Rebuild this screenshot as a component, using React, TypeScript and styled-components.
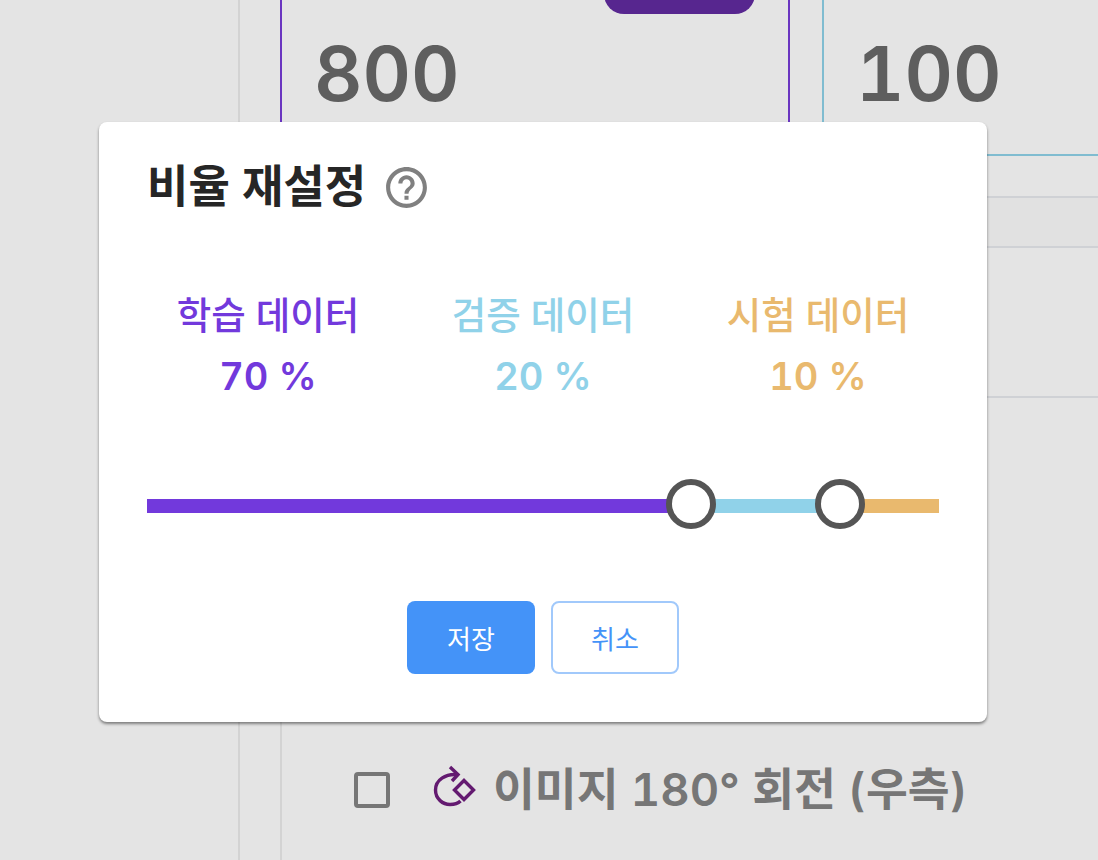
import { createGlobalStyle } from "styled-components";
import styled from "styled-components";

const splits = [
  { label: "학습 데이터", value: 70, color: "#7239dc", span: 544 },
  { label: "검증 데이터", value: 20, color: "#90d2e9", span: 149 },
  { label: "시험 데이터", value: 10, color: "#e9b96e", span: 99 },
];

export default function App() {
  return (
    <Page>
      <GlobalStyle />
      <Gutter />
      <Main>
        <Cards>
          <CountCard $tone="train">
            <TabButton />
            <Count>800</Count>
          </CountCard>
          <CountCard $tone="valid">
            <Count>100</Count>
          </CountCard>
        </Cards>
        <TableRow $height={50} $shade />
        <TableRow $height={150} />
        <OptionRow>
          <Checkbox />
          <RotateIcon viewBox="0 0 46 44" fill="none">
            <path d="M24 9.5C14 9 3.5 14.5 3.5 25C3.5 34 11 39.5 18 39.5C22 39.5 26 38.5 28.5 36" />
            <path d="M18 2L26 9.5L20 16" />
            <path d="M32 15.5L41.5 25L32 34.5L22.5 25Z" />
          </RotateIcon>
          <OptionLabel>이미지 180° 회전 (우측)</OptionLabel>
        </OptionRow>
      </Main>

      <Modal>
        <TitleRow>
          <Title>비율 재설정</Title>
          <HelpIcon viewBox="0 0 24 24">
            <path d="M11 18h2v-2h-2v2zm1-16C6.48 2 2 6.48 2 12s4.48 10 10 10 10-4.48 10-10S17.52 2 12 2zm0 18c-4.41 0-8-3.59-8-8s3.59-8 8-8 8 3.59 8 8-3.59 8-8 8zm0-14c-2.21 0-4 1.79-4 4h2c0-1.1.9-2 2-2s2 .9 2 2c0 2-3 1.75-3 5h2c0-2.25 3-2.5 3-5 0-2.21-1.79-4-4-4z" />
          </HelpIcon>
        </TitleRow>

        <Stats>
          {splits.map((s) => (
            <Stat key={s.label} $color={s.color}>
              <StatLabel>{s.label}</StatLabel>
              <StatValue>{s.value} %</StatValue>
            </Stat>
          ))}
        </Stats>

        <Slider>
          {splits.map((s) => (
            <Segment key={s.label} $color={s.color} $span={s.span} />
          ))}
          <Thumb $left={544} />
          <Thumb $left={693} />
        </Slider>

        <Actions>
          <SaveButton>저장</SaveButton>
          <CancelButton>취소</CancelButton>
        </Actions>
      </Modal>
    </Page>
  );
}

const GlobalStyle = createGlobalStyle`
  html, body {
    margin: 0;
    padding: 0;
    background: #e4e4e4;
  }

  * {
    box-sizing: border-box;
  }
`;

const fontStack = `Inter, "Noto Sans CJK KR", sans-serif`;

const Page = styled.div`
  position: relative;
  display: flex;
  width: 1098px;
  height: 860px;
  overflow: hidden;
  background: #e4e4e4;
  font-family: ${fontStack};
  font-variant-numeric: tabular-nums;
`;

const Gutter = styled.div`
  flex: 0 0 280px;
  padding-left: 238px;

  &::before {
    content: "";
    display: block;
    width: 2px;
    height: 100%;
    background: #d3d3d3;
  }
`;

const Main = styled.div`
  flex: 1;
  display: flex;
  flex-direction: column;
  box-shadow: inset 2px 0 0 #d3d3d3;
`;

const Cards = styled.div`
  display: flex;
  gap: 32px;
  height: 198px;
  border-bottom: 2px solid #cfd1d5;
`;

const CountCard = styled.div<{ $tone: "train" | "valid" }>`
  position: relative;
  height: ${(p) => (p.$tone === "train" ? "198px" : "156px")};
  flex: ${(p) => (p.$tone === "train" ? "0 0 510px" : "1")};
  padding: 32px 0 0 32px;
  border-left: 2px solid ${(p) => (p.$tone === "train" ? "#6a35c0" : "#80bcd0")};
  border-right: ${(p) => (p.$tone === "train" ? "2px solid #6a35c0" : "none")};
  border-bottom: ${(p) => (p.$tone === "valid" ? "2px solid #80bcd0" : "none")};
`;

const TabButton = styled.div`
  position: absolute;
  top: -20px;
  left: 322px;
  width: 151px;
  height: 34px;
  border-radius: 0 0 20px 20px;
  background: #57268f;
`;

const Count = styled.div`
  font-size: 75px;
  line-height: 84px;
  font-weight: 600;
  color: #5e5e5e;
`;

const TableRow = styled.div<{ $height: number; $shade?: boolean }>`
  height: ${(p) => p.$height}px;
  border-bottom: 2px solid #cfd1d5;
  background: ${(p) => (p.$shade ? "#e1e1e1" : "transparent")};
`;

const OptionRow = styled.div`
  display: flex;
  align-items: center;
  height: 100px;
  margin-top: auto;
  margin-bottom: 20px;
  padding-left: 74px;
`;

const Checkbox = styled.span`
  width: 36px;
  height: 36px;
  border: 4px solid #767676;
  border-radius: 4px;
`;

const RotateIcon = styled.svg`
  width: 46px;
  height: 44px;
  margin: 0 15px 6px 42px;

  path {
    stroke: #631a70;
    stroke-width: 3.4px;
  }
`;

const OptionLabel = styled.span`
  font-size: 45.5px;
  font-weight: 600;
  line-height: 60px;
  color: #767676;
  white-space: nowrap;
`;

const Modal = styled.div`
  position: absolute;
  top: 122px;
  left: 99px;
  width: 888px;
  height: 600px;
  padding: 36px 48px 48px;
  display: flex;
  flex-direction: column;
  border-radius: 8px;
  background: #fff;
  box-shadow: 0 2px 3px rgba(0, 0, 0, 0.45);
`;

const TitleRow = styled.div`
  display: flex;
  align-items: center;
  gap: 16px;
  height: 58px;
`;

const Title = styled.h2`
  margin: 0;
  font-size: 45px;
  line-height: 58px;
  font-weight: 700;
  color: #262626;
  white-space: nowrap;
`;

const HelpIcon = styled.svg`
  width: 49px;
  height: 49px;
  fill: #808080;
`;

const Stats = styled.div`
  display: grid;
  grid-template-columns: repeat(3, 275px);
  justify-content: center;
  margin-top: 75px;
`;

const Stat = styled.div<{ $color: string }>`
  display: flex;
  flex-direction: column;
  align-items: center;
  color: ${(p) => p.$color};
`;

const StatLabel = styled.div`
  font-size: 37.5px;
  line-height: 50px;
  font-weight: 500;
  white-space: nowrap;
`;

const StatValue = styled.div`
  font-size: 38px;
  line-height: 50px;
  margin-top: 10px;
  font-weight: 600;
`;

const Slider = styled.div`
  position: relative;
  display: flex;
  height: 14px;
  margin-top: 98px;
`;

const Segment = styled.div<{ $color: string; $span: number }>`
  flex: 0 0 ${(p) => p.$span}px;
  background: ${(p) => p.$color};
`;

const Thumb = styled.span<{ $left: number }>`
  position: absolute;
  top: -20px;
  left: ${(p) => p.$left - 25}px;
  width: 50px;
  height: 50px;
  border: 6px solid #555;
  border-radius: 50%;
  background: #fff;
`;

const Actions = styled.div`
  display: flex;
  justify-content: center;
  gap: 16px;
  margin-top: 88px;
`;

const ActionButton = styled.button`
  width: 128px;
  height: 73px;
  padding: 0;
  border-radius: 8px;
  font-family: inherit;
  font-size: 26px;
  font-weight: 400;
`;

const SaveButton = styled(ActionButton)`
  border: none;
  background: #4493f8;
  color: #fff;
`;

const CancelButton = styled(ActionButton)`
  border: 2px solid #a1c9fb;
  background: #fff;
  color: #4493f8;
`;
